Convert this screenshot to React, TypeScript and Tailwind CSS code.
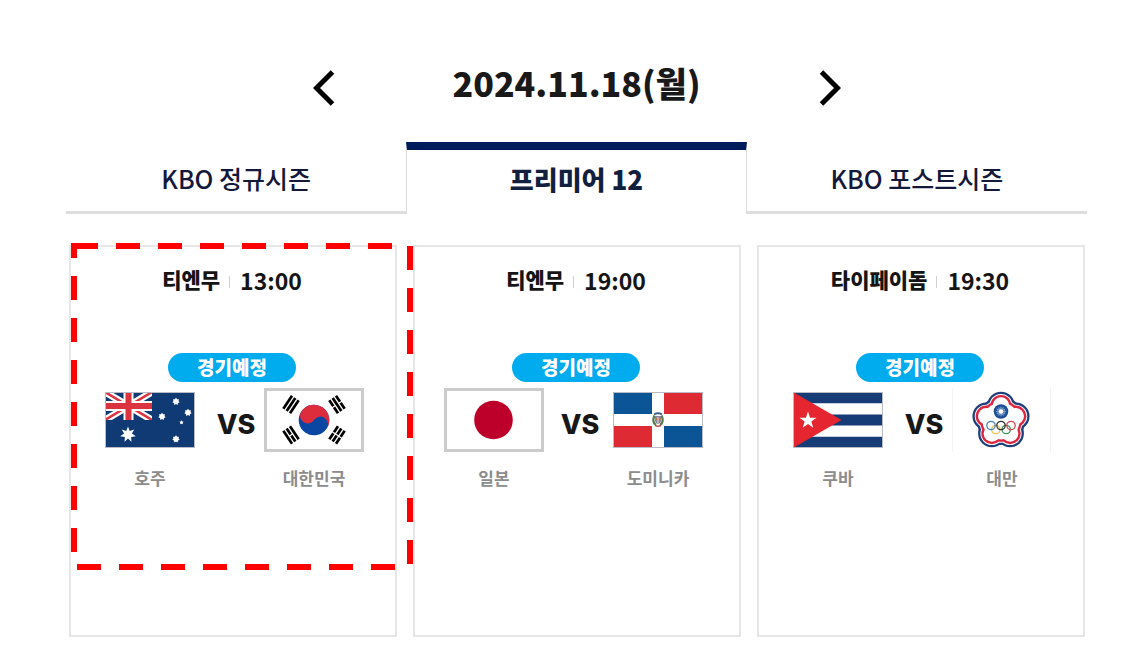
import type { ReactNode } from 'react';

const NAVY = '#0f3a74';

function star(cx: number, cy: number, outer: number, inner: number, points: number) {
  const result: string[] = [];
  for (let i = 0; i < points * 2; i++) {
    const r = i % 2 === 0 ? outer : inner;
    const a = -Math.PI / 2 + (i * Math.PI) / points;
    result.push(`${(cx + r * Math.cos(a)).toFixed(2)},${(cy + r * Math.sin(a)).toFixed(2)}`);
  }
  return result.join(' ');
}

function PlainFlag({ label, children }: { label: string; children: ReactNode }) {
  return (
    <svg role="img" aria-label={label} width="90" height="56" viewBox="0 0 90 56">
      {children}
      <rect x="0.5" y="0.5" width="89" height="55" fill="none" stroke="#b9bcc4" />
    </svg>
  );
}

function Australia() {
  return (
    <PlainFlag label="호주 국기">
      <rect width="90" height="56" fill={NAVY} />
      <svg width="47" height="28" viewBox="0 0 47 28">
        <path d="M0 0L47 28M47 0L0 28" stroke="#fff" strokeWidth="7" />
        <path d="M0 0L47 28M47 0L0 28" stroke="#dc3340" strokeWidth="2.4" />
        <path d="M23.5 0V28M0 14H47" stroke="#fff" strokeWidth="10" />
        <path d="M23.5 0V28M0 14H47" stroke="#dc3340" strokeWidth="6" />
      </svg>
      <g fill="#fff">
        <polygon points={star(23, 42.5, 8, 4, 7)} />
        <polygon points={star(71, 9.5, 3.8, 2.6, 7)} />
        <polygon points={star(57, 24.5, 3.8, 2.6, 7)} />
        <polygon points={star(83, 20.5, 3.8, 2.6, 7)} />
        <polygon points={star(76.5, 30.5, 2.3, 1.2, 5)} />
        <polygon points={star(71, 47, 3.8, 2.6, 7)} />
      </g>
    </PlainFlag>
  );
}

function Trigram({ x, y, angle, broken }: { x: number; y: number; angle: number; broken: boolean[] }) {
  return (
    <g transform={`translate(${x} ${y}) rotate(${angle})`} stroke="#000" strokeWidth="2.7">
      {broken.map((b, i) => (
        <path key={i} d={b ? `M${(i - 1) * 4} -7.800V-0.6M${(i - 1) * 4} 0.6V7.800` : `M${(i - 1) * 4} -7.800V7.800`} />
      ))}
    </g>
  );
}

function Korea() {
  return (
    <svg role="img" aria-label="대한민국 국기" width="100" height="64" viewBox="0 0 100 64">
      <rect x="1.5" y="1.5" width="97" height="61" fill="#fff" stroke="#cbcbcb" strokeWidth="3" />
      <g transform="translate(50 32) rotate(33.7)">
        <circle r="15.3" fill="#0a47a3" />
        <path d="M-15.3 0A15.3 15.3 0 0 1 15.3 0A7.65 7.65 0 0 0 0 0A7.65 7.65 0 0 1 -15.3 0Z" fill="#dd2c3b" />
      </g>
      <Trigram x={27} y={16.5} angle={33.7} broken={[false, false, false]} />
      <Trigram x={73} y={16.5} angle={-33.7} broken={[true, false, true]} />
      <Trigram x={27} y={47} angle={-33.7} broken={[false, true, false]} />
      <Trigram x={73} y={47} angle={33.7} broken={[true, true, true]} />
    </svg>
  );
}

function Japan() {
  return (
    <svg role="img" aria-label="일본 국기" width="100" height="64" viewBox="0 0 100 64">
      <rect x="1.5" y="1.5" width="97" height="61" fill="#fff" stroke="#cbcbcb" strokeWidth="3" />
      <circle cx="49.5" cy="32" r="19.3" fill="#bd0029" />
    </svg>
  );
}

function Dominican() {
  return (
    <PlainFlag label="도미니카 국기">
      <rect width="90" height="56" fill="#fff" />
      <path d="M0 0H39V22H0ZM51 34H90V56H51Z" fill="#0b5596" />
      <path d="M51 0H90V22H51ZM0 34H39V56H0Z" fill="#de2a33" />
      <path d="M41 22.5Q45 20 49 22.5" stroke="#3c6487" strokeWidth="1.8" fill="none" />
      <path d="M41.5 23.500Q38.500 30 43 33M48.500 23.500Q51.500 30 47 33" stroke="#5b7d52" strokeWidth="2.4" fill="none" />
      <path d="M42 24H48V29Q47.500 31.500 45 32Q42.500 31.500 42 29Z" fill="#8a86a0" />
      <path d="M42 27H48" stroke="#c07a52" strokeWidth="2" />
      <path d="M45 25V31" stroke="#e8dcd0" strokeWidth="1" />
      <path d="M42 33.500Q45 35 48 33.500" stroke="#c0504a" strokeWidth="1.4" fill="none" />
    </PlainFlag>
  );
}

function Cuba() {
  return (
    <PlainFlag label="쿠바 국기">
      <rect width="90" height="56" fill="#fff" />
      <path d="M0 0H90V11.200H0ZM0 22.400H90V33.600H0ZM0 44.800H90V56H0Z" fill="#153c76" />
      <path d="M0 0L48.500 28L0 56Z" fill="#e5252f" />
      <polygon points={star(15, 28.5, 9, 3.5, 5)} fill="#fff" />
    </PlainFlag>
  );
}

const PETALS = [0, 1, 2, 3, 4].map((i) => {
  const a = -Math.PI / 2 + (i * 2 * Math.PI) / 5;
  return { x: 49 + 15.5 * Math.cos(a), y: 33 + 15.5 * Math.sin(a) };
});

function Blossom({ r, fill }: { r: number; fill: string }) {
  return (
    <g fill={fill}>
      {PETALS.map((p, i) => (
        <circle key={i} cx={p.x} cy={p.y} r={r} />
      ))}
      <circle cx="49" cy="33" r={r + 10.2} />
    </g>
  );
}

function Taiwan() {
  return (
    <svg role="img" aria-label="대만 올림픽기" width="100" height="64" viewBox="0 0 100 64">
      <path d="M0.500 0V64M98.500 0V64" stroke="#f3f3f3" />
      <Blossom r={13.8} fill="#1f3f7d" />
      <Blossom r={11.5} fill="#fff" />
      <Blossom r={10.6} fill="#dc2740" />
      <Blossom r={8.2} fill="#fff" />
      <circle cx="49" cy="23.500" r="7.3" fill="#1d4d94" />
      <polygon points={star(49, 23.5, 5.6, 3.4, 12)} fill="#7fa5d3" />
      <circle cx="49" cy="23.500" r="2.8" fill="#fff" stroke="#1d4d94" strokeWidth="0.6" />
      <g fill="none" strokeWidth="1.3">
        <circle cx="43.800" cy="41.500" r="4.2" stroke="#ecc04c" />
        <circle cx="54.200" cy="41.500" r="4.2" stroke="#37955a" />
        <circle cx="39" cy="37.500" r="4.2" stroke="#4a84b5" />
        <circle cx="49" cy="37.500" r="4.2" stroke="#333" />
        <circle cx="59" cy="37.500" r="4.2" stroke="#d44355" />
      </g>
    </svg>
  );
}

type Team = { name: string; flag: ReactNode };
type Game = { place: string; time: string; home: Team; away: Team };

const TABS = [
  { name: 'KBO 정규시즌', selected: false },
  { name: '프리미어 12', selected: true },
  { name: 'KBO 포스트시즌', selected: false },
];

const GAMES: Game[] = [
  { place: '티엔무', time: '13:00', home: { name: '호주', flag: <Australia /> }, away: { name: '대한민국', flag: <Korea /> } },
  { place: '티엔무', time: '19:00', home: { name: '일본', flag: <Japan /> }, away: { name: '도미니카', flag: <Dominican /> } },
  { place: '타이페이돔', time: '19:30', home: { name: '쿠바', flag: <Cuba /> }, away: { name: '대만', flag: <Taiwan /> } },
];

function TeamView({ team }: { team: Team }) {
  return (
    <figure className="w-[100px]">
      <div className="flex h-16 items-center justify-center">{team.flag}</div>
      <figcaption className="mt-3 text-center text-[17px] leading-7 font-bold text-[#8c8c8c]">{team.name}</figcaption>
    </figure>
  );
}

function GameCard({ game }: { game: Game }) {
  return (
    <li className="flex min-h-[392px] flex-col items-center border-2 border-[#e6e6e6] pt-[19px] pr-[2px]">
      <div className="flex h-7 items-center text-[#151515]">
        <span className="text-[21px] font-black">{game.place}</span>
        <span className="mt-1 mr-[10px] ml-[9px] h-3 w-px bg-[#d0d0d0]" />
        <time className="text-[23px] font-bold">{game.time}</time>
      </div>
      <span className="mt-[59px] flex h-[29px] w-32 items-center justify-center rounded-full bg-[#00abee] text-[19px] font-black text-white">
        경기예정
      </span>
      <div className="mt-[6px] flex">
        <TeamView team={game.home} />
        <span className="flex h-[74px] w-16 items-center justify-center pl-2 font-['Inter',sans-serif] text-[27px] font-extrabold text-[#171717]">
          VS
        </span>
        <TeamView team={game.away} />
      </div>
    </li>
  );
}

export default function App() {
  return (
    <main className="min-h-screen bg-white pt-14 pr-[49px] pb-8 pl-[66px] font-['Noto_Sans_CJK_KR',sans-serif]">
      <header className="flex h-16 items-center justify-center gap-[118px]">
        <button type="button" aria-label="이전 날짜">
          <svg width="22" height="36" viewBox="0 0 22 36" fill="none" stroke="#000" strokeWidth="5">
            <path d="M19.500 2L3.500 18L19.500 34" />
          </svg>
        </button>
        <h1 className="pb-[10px] text-[34px] leading-[48px] font-black whitespace-nowrap text-[#191919]">2024.11.18(월)</h1>
        <button type="button" aria-label="다음 날짜">
          <svg width="22" height="36" viewBox="0 0 22 36" fill="none" stroke="#000" strokeWidth="5">
            <path d="M2.500 2L18.500 18L2.500 34" />
          </svg>
        </button>
      </header>

      <div role="tablist" className="mt-[22px] grid h-[72px] grid-cols-3">
        {TABS.map((tab) => (
          <button
            key={tab.name}
            type="button"
            role="tab"
            aria-selected={tab.selected}
            className={
              tab.selected
                ? 'border-x border-t-8 border-x-[#dcdcdc] border-t-[#001b5c] pb-2 text-[26px] font-black text-[#12203f]'
                : 'border-b-[3px] border-[#dedede] pt-1 text-[25px] font-medium text-[#14183a]'
            }
          >
            {tab.name}
          </button>
        ))}
      </div>

      <div className="relative mt-[31px] mr-[2px] ml-[3px]">
        <ul className="grid grid-cols-3 gap-4">
          {GAMES.map((game) => (
            <GameCard key={game.home.name} game={game} />
          ))}
        </ul>
        <svg
          aria-hidden="true"
          className="pointer-events-none absolute -top-[2px] left-[2px]"
          width="342"
          height="327"
          viewBox="0 0 342 327"
        >
          <path d="M3 3H339V324H3Z" fill="none" stroke="#fe0000" strokeWidth="6" strokeDasharray="24 18" />
        </svg>
      </div>
    </main>
  );
}
